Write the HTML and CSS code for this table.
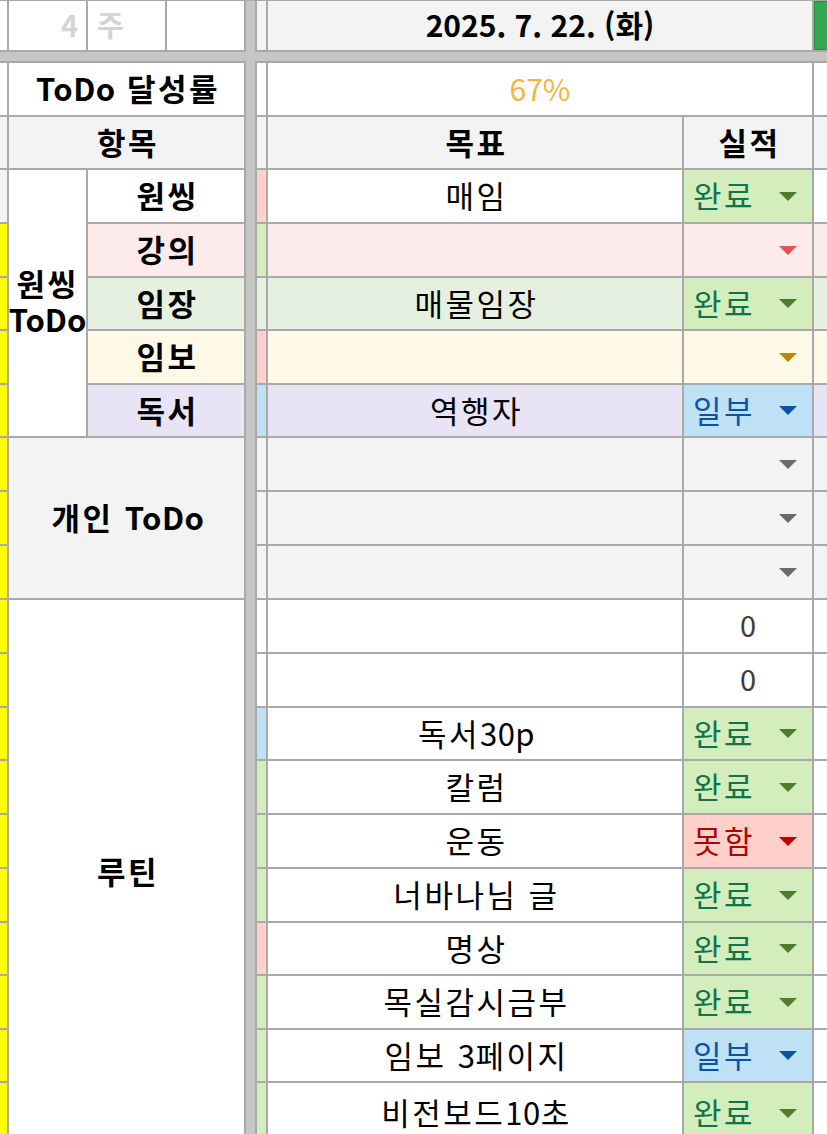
FILE: index.html
```html
<!DOCTYPE html>
<html lang="ko">
<head>
<meta charset="utf-8">
<title>ToDo</title>
<link rel="stylesheet" href="styles.css">
</head>
<body>
<div class="sheet">
  <div class="frozen-col"></div>
  <div class="frozen-row"></div>

  <!-- row 1 -->
  <div class="c w"></div>
  <div class="c w week num">4</div>
  <div class="c w week unit">주</div>
  <div class="c w"></div>
  <div class="c g"></div>
  <div class="c g span2 date">2025. 7. 22. (화)</div>
  <div class="c green"></div>

  <!-- row 3 -->
  <div class="c w"></div>
  <div class="c w span3 bold"><span class="latin">ToDo</span>&nbsp;달성률</div>
  <div class="c w"></div>
  <div class="c w span2 rate">67%</div>
  <div class="c w"></div>

  <!-- row 4 -->
  <div class="c g"></div>
  <div class="c g span3 bold">항목</div>
  <div class="c g"></div>
  <div class="c g bold">목표</div>
  <div class="c g bold">실적</div>
  <div class="c g"></div>

  <!-- 원씽 ToDo group -->
  <div class="c g"></div>
  <div class="c w rspan5 bold group"><span class="line">원씽</span><span class="line latin">ToDo</span></div>
  <div class="c w span2 bold">원씽</div>
  <div class="c s-pink"></div>
  <div class="c w">매임</div>
  <div class="c chip chip-green"><span>완료</span><svg class="arr" viewBox="0 0 18 9"><path d="M0 0H18L9 9Z"/></svg></div>
  <div class="c w"></div>

  <div class="c y"></div>
  <div class="c r-pink span2 bold">강의</div>
  <div class="c s-green"></div>
  <div class="c r-pink"></div>
  <div class="c r-pink chip arr-red"><span></span><svg class="arr" viewBox="0 0 18 9"><path d="M0 0H18L9 9Z"/></svg></div>
  <div class="c r-pink"></div>

  <div class="c y"></div>
  <div class="c r-green span2 bold">임장</div>
  <div class="c r-green"></div>
  <div class="c r-green">매물임장</div>
  <div class="c chip chip-green"><span>완료</span><svg class="arr" viewBox="0 0 18 9"><path d="M0 0H18L9 9Z"/></svg></div>
  <div class="c r-green"></div>

  <div class="c y"></div>
  <div class="c r-yellow span2 bold">임보</div>
  <div class="c s-pink"></div>
  <div class="c r-yellow"></div>
  <div class="c r-yellow chip arr-gold"><span></span><svg class="arr" viewBox="0 0 18 9"><path d="M0 0H18L9 9Z"/></svg></div>
  <div class="c r-yellow"></div>

  <div class="c y"></div>
  <div class="c r-purple span2 bold">독서</div>
  <div class="c s-blue"></div>
  <div class="c r-purple">역행자</div>
  <div class="c chip chip-blue"><span>일부</span><svg class="arr" viewBox="0 0 18 9"><path d="M0 0H18L9 9Z"/></svg></div>
  <div class="c r-purple"></div>

  <!-- 개인 ToDo -->
  <div class="c y"></div>
  <div class="c g span3 rspan3 bold">개인&nbsp;<span class="latin">ToDo</span></div>
  <div class="c g"></div>
  <div class="c g"></div>
  <div class="c g chip arr-gray"><span></span><svg class="arr" viewBox="0 0 18 9"><path d="M0 0H18L9 9Z"/></svg></div>
  <div class="c g"></div>

  <div class="c y"></div>
  <div class="c g"></div>
  <div class="c g"></div>
  <div class="c g chip arr-gray"><span></span><svg class="arr" viewBox="0 0 18 9"><path d="M0 0H18L9 9Z"/></svg></div>
  <div class="c g"></div>

  <div class="c y"></div>
  <div class="c g"></div>
  <div class="c g"></div>
  <div class="c g chip arr-gray"><span></span><svg class="arr" viewBox="0 0 18 9"><path d="M0 0H18L9 9Z"/></svg></div>
  <div class="c g"></div>

  <!-- 루틴 -->
  <div class="c y"></div>
  <div class="c w span3 rspan10 bold">루틴</div>
  <div class="c w"></div>
  <div class="c w"></div>
  <div class="c w zero">0</div>
  <div class="c w"></div>

  <div class="c y"></div>
  <div class="c w"></div>
  <div class="c w"></div>
  <div class="c w zero">0</div>
  <div class="c w"></div>

  <div class="c y"></div>
  <div class="c s-blue"></div>
  <div class="c w">독서<span class="latin">30p</span></div>
  <div class="c chip chip-green"><span>완료</span><svg class="arr" viewBox="0 0 18 9"><path d="M0 0H18L9 9Z"/></svg></div>
  <div class="c w"></div>

  <div class="c y"></div>
  <div class="c s-green"></div>
  <div class="c w">칼럼</div>
  <div class="c chip chip-green"><span>완료</span><svg class="arr" viewBox="0 0 18 9"><path d="M0 0H18L9 9Z"/></svg></div>
  <div class="c w"></div>

  <div class="c y"></div>
  <div class="c s-green"></div>
  <div class="c w">운동</div>
  <div class="c chip chip-red"><span>못함</span><svg class="arr" viewBox="0 0 18 9"><path d="M0 0H18L9 9Z"/></svg></div>
  <div class="c w"></div>

  <div class="c y"></div>
  <div class="c s-green"></div>
  <div class="c w">너바나님 글</div>
  <div class="c chip chip-green"><span>완료</span><svg class="arr" viewBox="0 0 18 9"><path d="M0 0H18L9 9Z"/></svg></div>
  <div class="c w"></div>

  <div class="c y"></div>
  <div class="c s-pink"></div>
  <div class="c w">명상</div>
  <div class="c chip chip-green"><span>완료</span><svg class="arr" viewBox="0 0 18 9"><path d="M0 0H18L9 9Z"/></svg></div>
  <div class="c w"></div>

  <div class="c y"></div>
  <div class="c s-green"></div>
  <div class="c w">목실감시금부</div>
  <div class="c chip chip-green"><span>완료</span><svg class="arr" viewBox="0 0 18 9"><path d="M0 0H18L9 9Z"/></svg></div>
  <div class="c w"></div>

  <div class="c y"></div>
  <div class="c s-green"></div>
  <div class="c w">임보&nbsp;<span class="latin">3</span>페이지</div>
  <div class="c chip chip-blue"><span>일부</span><svg class="arr" viewBox="0 0 18 9"><path d="M0 0H18L9 9Z"/></svg></div>
  <div class="c w"></div>

  <div class="c y"></div>
  <div class="c s-green"></div>
  <div class="c w">비전보드<span class="latin">10</span>초</div>
  <div class="c chip chip-green"><span>완료</span><svg class="arr" viewBox="0 0 18 9"><path d="M0 0H18L9 9Z"/></svg></div>
  <div class="c w"></div>
</div>
</body>
</html>
```

FILE: styles.css
```css
* { box-sizing: border-box; }
html, body {
  margin: 0;
  padding: 0;
  width: 827px;
  height: 1134px;
  overflow: hidden;
  background: #fff;
}
.sheet {
  display: grid;
  grid-template-columns: 7px 77px 77px 77px 9px 9px 414px 128px 20px;
  grid-template-rows: 49px 9px 52px 51px 52px 52px 51px 52px 51px 52px 52px 52px 52px 52px 51px 52px 52px 52px 51px 52px 51px 60px;
  gap: 2px;
  padding-top: 1px;
  background: #a9a9a9;
  font-family: "Noto Sans CJK KR", "Noto Sans", sans-serif;
  font-size: 31px;
  color: #000;
  width: 840px;
}
.frozen-col {
  grid-column: 5;
  grid-row: 1 / -1;
  background: #c6c6c6;
}
.frozen-row {
  grid-column: 1 / -1;
  grid-row: 2;
  background: #c6c6c6;
}
.c {
  display: flex;
  align-items: center;
  justify-content: center;
  overflow: hidden;
  white-space: nowrap;
  line-height: 1;
  letter-spacing: 2.5px;
  padding-left: 3px;
  padding-bottom: 3px;
}
.latin { letter-spacing: 0.5px; }
.span2 { grid-column: span 2; }
.span3 { grid-column: span 3; }
.rspan3 { grid-row: span 3; }
.rspan5 { grid-row: span 5; }
.rspan10 { grid-row: span 10; }

.w { background: #ffffff; }
.g { background: #f3f3f3; }
.y { background: #ffff00; }
.green { background: #34a853; box-shadow: inset 0 0 0 1px #1e8e3e; }
.r-pink { background: #fdeaea; }
.r-green { background: #e6f0e1; }
.r-yellow { background: #fef8e7; }
.r-purple { background: #e8e4f5; }
.s-pink { background: #ffcfc9; }
.s-green { background: #d4edbc; }
.s-blue { background: #bfe1f6; }

.bold { font-weight: 700; }
.week { font-weight: 700; color: #d4d4d4; letter-spacing: 0; padding-left: 0; font-size: 29px; }
.week.num { justify-content: flex-end; padding-right: 8px; }
.week.unit { justify-content: flex-start; padding-left: 9px; }
.date { font-weight: 700; font-size: 30px; letter-spacing: 0; padding-left: 0; }
.rate { color: #f6b540; font-size: 30px; letter-spacing: 0; padding-left: 0; }
.group { flex-direction: column; padding-left: 0; padding-bottom: 5px; }
.group .line { display: block; line-height: 36px; }
.group .latin { letter-spacing: 0; }
.zero { color: #3c3c3c; letter-spacing: 0; padding-left: 0; font-size: 29px; }

.chip {
  justify-content: space-between;
  padding: 0 15px 0 9px;
}
.chip span { min-width: 1px; padding-bottom: 3px; }
.arr { width: 18px; height: 9px; display: block; }
.chip-green { background: #d4edbc; color: #11734b; }
.chip-green .arr { fill: #4e7d28; }
.chip-blue { background: #bfe1f6; color: #0a53a8; }
.chip-blue .arr { fill: #0a53a8; }
.chip-red { background: #ffcfc9; color: #b10202; }
.chip-red .arr { fill: #c00000; }
.arr-red .arr { fill: #e5534b; }
.arr-gold .arr { fill: #b8860b; }
.arr-gray .arr { fill: #6b6b6b; }
```
